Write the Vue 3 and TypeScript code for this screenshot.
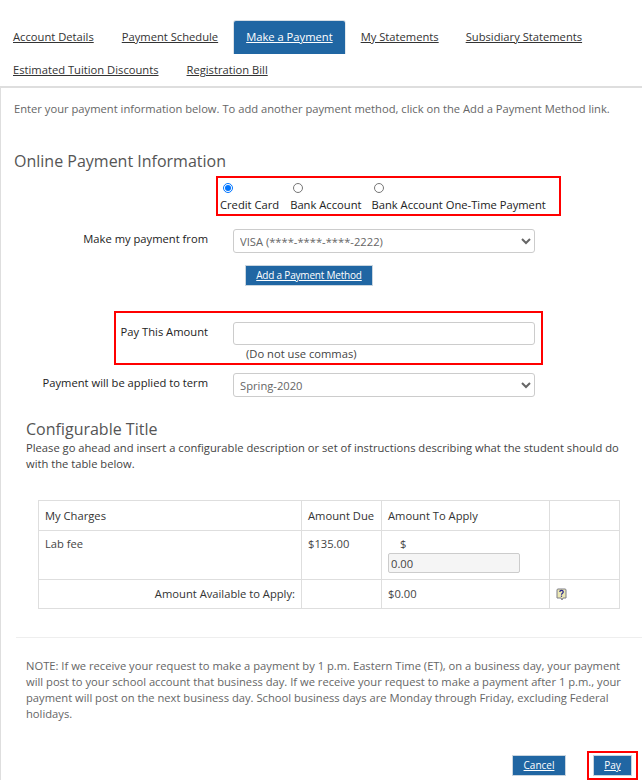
<script setup lang="ts">
import { ref } from 'vue'

const tabs = [
  'Account Details',
  'Payment Schedule',
  'Make a Payment',
  'My Statements',
  'Subsidiary Statements',
  'Estimated Tuition Discounts',
  'Registration Bill',
]
const methods = ['Credit Card', 'Bank Account', 'Bank Account One-Time Payment']
const method = ref('Credit Card')
</script>

<template>
  <div class="page">
    <nav class="tabs">
      <a v-for="t in tabs" :key="t" href="#" class="tab" :class="{ active: t === 'Make a Payment' }">{{ t }}</a>
    </nav>
    <main class="panel">
      <p class="intro">Enter your payment information below. To add another payment method, click on the Add a Payment Method link.</p>
      <h2 class="heading">Online Payment Information</h2>
      <div class="methods">
        <label v-for="m in methods" :key="m" class="method">
          <input v-model="method" type="radio" name="method" :value="m" />
          <span>{{ m }}</span>
        </label>
      </div>
      <div class="row from-row">
        <label class="row-label">Make my payment from</label>
        <select class="field">
          <option>VISA (****-****-****-2222)</option>
        </select>
      </div>
      <div class="add-row"><a href="#" class="btn add">Add a Payment Method</a></div>
      <div class="amount-box">
        <div class="row">
          <label class="row-label">Pay This Amount</label>
          <input class="field" type="text" />
        </div>
        <div class="hint">(Do not use commas)</div>
      </div>
      <div class="row term-row">
        <label class="row-label">Payment will be applied to term</label>
        <select class="field">
          <option>Spring-2020</option>
        </select>
      </div>
      <section class="config">
        <h3 class="config-title">Configurable Title</h3>
        <p class="config-desc">Please go ahead and insert a configurable description or set of instructions describing what the student should do with the table below.</p>
      </section>
      <table class="charges">
        <colgroup>
          <col class="c1" /><col class="c2" /><col class="c3" /><col class="c4" />
        </colgroup>
        <thead>
          <tr><th>My Charges</th><th>Amount Due</th><th>Amount To Apply</th><th></th></tr>
        </thead>
        <tbody>
          <tr class="charge-row">
            <td>Lab fee</td>
            <td>$135.00</td>
            <td>
              <div class="dollar">$</div>
              <input class="apply" type="text" value="0.00" readonly />
            </td>
            <td></td>
          </tr>
          <tr class="total-row">
            <td class="total-label">Amount Available to Apply:</td>
            <td></td>
            <td>$0.00</td>
            <td>
              <svg class="help" width="11" height="13" viewBox="0 0 11 13" aria-label="Help">
                <path d="M2 1h7a1 1 0 0 1 1 1v8H7l-1 2-1-2H1V2a1 1 0 0 1 1-1z" fill="#ece8b4" stroke="#7d7d86" stroke-width="1" />
                <path d="M3.8 4c0-2.2 3.4-2.2 3.4 0 0 1.3-1.7 1.3-1.7 2.7" fill="none" stroke="#23238c" stroke-width="1.2" />
                <rect x="4.9" y="7.6" width="1.2" height="1.2" fill="#23238c" />
              </svg>
            </td>
          </tr>
        </tbody>
      </table>
      <hr class="rule" />
      <p class="note">NOTE: If we receive your request to make a payment by 1 p.m. Eastern Time (ET), on a business day, your payment will post to your school account that business day. If we receive your request to make a payment after 1 p.m., your payment will post on the next business day. School business days are Monday through Friday, excluding Federal holidays.</p>
      <div class="actions">
        <a href="#" class="btn cancel">Cancel</a>
        <span class="pay-box"><a href="#" class="btn pay">Pay</a></span>
      </div>
    </main>
  </div>
</template>

<style>
html, body { margin: 0; background: #fff; overflow: hidden; }
</style>

<style scoped>
.page {
  width: 642px;
  height: 784px;
  overflow: hidden;
  box-sizing: border-box;
  padding-top: 21px;
  font: 11.2px/16px "Open Sans", sans-serif;
  color: #333;
}
.tabs {
  display: flex;
  flex-wrap: wrap;
  column-gap: 4px;
  padding-left: 1px;
  height: 65px;
  align-content: flex-start;
}
.tab {
  box-sizing: border-box;
  height: 33px;
  padding: 0 12px;
  line-height: 32px;
  color: #333;
  text-decoration: underline;
  white-space: nowrap;
}
.tab.active {
  background: #2066a3;
  color: #fff;
  border-radius: 2px 2px 0 0;
  box-shadow: 0 0 0 1px #d5dde4;
  clip-path: inset(-1px -1px 0 -1px);
}
.tab:nth-child(5) { padding-left: 11px; }
.panel {
  border-top: 2px solid #dedede;
  border-left: 1px solid #dedede;
  padding: 13px 0 0 13px;
}
.intro { margin: 0; color: #666; }
.heading {
  margin: 32px 0 0;
  font-size: 16px;
  line-height: 24px;
  font-weight: 400;
  color: #555;
}
.methods {
  box-sizing: border-box;
  display: flex;
  width: 345px;
  height: 40px;
  margin: 3px 0 0 202px;
  border: 2px solid #f00;
  padding: 2px 0 0 2px;
  gap: 10px;
  color: #222;
}
.method { display: flex; flex-direction: column; align-items: flex-start; line-height: 16px; }
.method:nth-child(2) { margin-left: 1px; }
.method input {
  width: 10px;
  height: 10px;
  margin: 3px 0 4px 3px;
  accent-color: #0075ff;
}
.row { display: flex; align-items: flex-start; gap: 25px; }
.row-label {
  width: 194px;
  flex: none;
  text-align: right;
  color: #222;
  padding-top: 2px;
}
.field {
  box-sizing: border-box;
  width: 302px;
  height: 24px;
  border: 1px solid #ccc;
  border-radius: 3px;
  background: #fff;
  padding: 0 2px;
  font: 11.2px "Open Sans", sans-serif;
  color: #666;
}
.from-row { margin-top: 13px; }
.add-row { padding-left: 231px; margin-top: 12px; }
.btn {
  display: inline-block;
  box-sizing: border-box;
  height: 21px;
  line-height: 18px;
  border: 1px solid #c9d5df;
  background: #2066a3;
  color: #fff;
  text-align: center;
  text-decoration: underline;
  font-size: 10px;
}
.add { width: 128px; letter-spacing: -0.2px; }
.amount-box {
  box-sizing: border-box;
  width: 429px;
  height: 54px;
  margin: 25px 0 0 100px;
  border: 2px solid #f00;
  padding-top: 9px;
}
.amount-box .row-label { width: 92px; padding-top: 2px; text-align: right; }
.amount-box .field { height: 23px; }
.hint { margin: 1px 0 0 130px; color: #444; line-height: 16px; }
.term-row { margin-top: 8px; }
.config { padding: 21px 0 0 12px; }
.config-title {
  margin: 0;
  font-size: 16px;
  line-height: 22px;
  font-weight: 400;
  color: #555;
}
.config-desc { margin: 0; width: 610px; color: #444; }
.charges {
  width: 582px;
  margin: 28px 0 0 24px;
  border-collapse: collapse;
  table-layout: fixed;
  color: #444;
}
.c1 { width: 263px; }
.c2 { width: 80px; }
.c3 { width: 168px; }
.charges th, .charges td {
  border: 1px solid #dedede;
  padding: 0 6px;
  text-align: left;
  font-weight: 400;
  vertical-align: top;
}
.charges th { height: 29px; vertical-align: middle; color: #333; }
.charge-row td { height: 49px; padding-top: 5px; box-sizing: border-box; }
.total-row td { height: 28px; vertical-align: middle; }
.charges .total-label { text-align: right; color: #333; }
.dollar { padding-left: 12px; line-height: 16px; }
.apply {
  display: block;
  box-sizing: border-box;
  width: 132px;
  height: 20px;
  margin-top: 1px;
  background: #f5f5f5;
  border: 1px solid #ccc;
  border-radius: 2px;
  padding: 0 2px;
  font: 11.2px "Open Sans", sans-serif;
  color: #444;
}
.help { display: block; }
.rule {
  margin: 28px 0 0 2px;
  border: 0;
  border-top: 1px solid #eee;
}
.note {
  margin: 20px 0 0 12px;
  width: 600px;
  color: #666;
}
.actions {
  display: flex;
  justify-content: flex-end;
  align-items: center;
  margin-top: 29px;
  padding-right: 4px;
}
.cancel { width: 54px; }
.pay-box {
  display: block;
  box-sizing: border-box;
  margin-left: 21px;
  width: 51px;
  height: 29px;
  border: 2px solid #f00;
  padding: 2px 4px;
}
.pay { width: 39px; display: block; }
</style>
